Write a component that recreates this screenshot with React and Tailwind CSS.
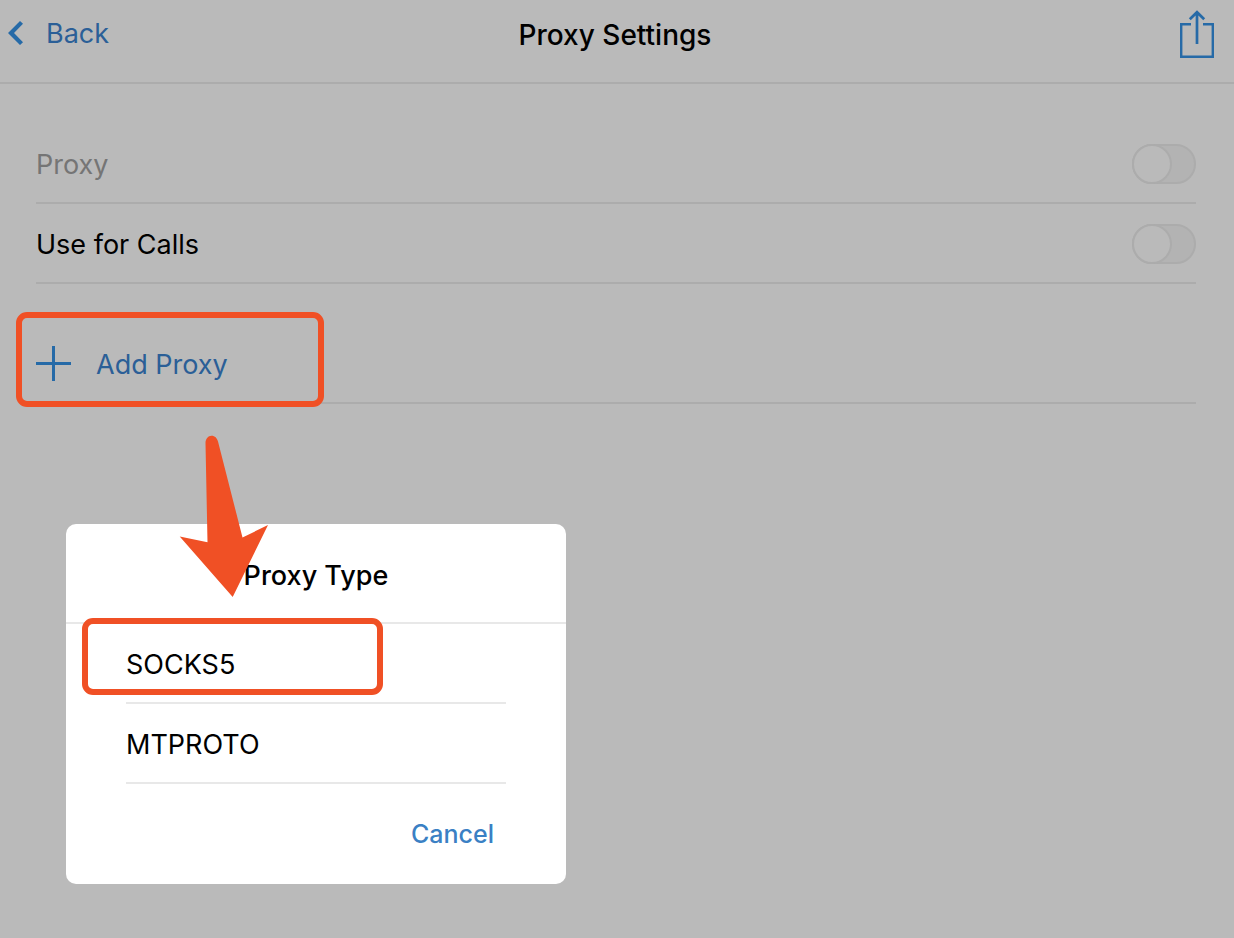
const proxyTypes = ["SOCKS5", "MTPROTO"];

function Highlight({ className }) {
  return (
    <span
      aria-hidden="true"
      className={`pointer-events-none absolute rounded-[11px] border-6 border-[#f05025] ${className}`}
    />
  );
}

function ToggleRow({ id, label, disabled }) {
  return (
    <div className="flex h-20 items-center justify-between border-b-2 border-[#acacac] pt-0.5">
      <label htmlFor={id} className={disabled ? "pt-0.5 text-[#757575]" : "pt-0.5 text-black"}>
        {label}
      </label>
      <input
        id={id}
        type="checkbox"
        role="switch"
        disabled={disabled}
        className="relative h-10 w-16 appearance-none rounded-full border-2 border-[#acacac] bg-[#b3b3b3] before:absolute before:-top-0.5 before:-left-0.5 before:size-10 before:rounded-full before:border-2 before:border-[#acacac] before:bg-[#bababa]"
      />
    </div>
  );
}

function Header() {
  return (
    <header className="grid h-[84px] grid-cols-[1fr_auto_1fr] items-center border-b-2 border-[#acacac] pr-3 pb-3.5 pl-2">
      <button type="button" className="flex items-center gap-6 justify-self-start text-[#2b5f97]">
        <svg width="14" height="26" viewBox="0 0 14 26" className="overflow-visible" aria-hidden="true">
          <path d="M0 12 12 0l3 2.700L6 12l9 9.300-3 2.700Z" fill="#266aa7" />
        </svg>
        Back
      </button>
      <h1 className="pt-0.5 text-[28px] font-medium text-black">Proxy Settings</h1>
      <button type="button" aria-label="Share" className="mr-2 justify-self-end">
        <svg width="34" height="48" viewBox="0 0 34 48" fill="none" stroke="#266aa7" aria-hidden="true" className="overflow-visible">
          <path d="M11 14.300H1.200v32.500h31.600V14.300H23" strokeWidth="2.400" />
          <path d="M17 34V2.500M9.800 9.200 17 2.200l7.200 7" strokeWidth="2.700" />
        </svg>
      </button>
    </header>
  );
}

function ProxyTypeDialog() {
  return (
    <section
      role="dialog"
      aria-labelledby="proxy-type-title"
      className="absolute top-[524px] left-[66px] w-[500px] rounded-[10px] bg-white text-black"
    >
      <h2
        id="proxy-type-title"
        className="flex h-[100px] items-center justify-center border-b-2 border-[#e8e8e8] pt-1.5 font-medium"
      >
        Proxy Type
      </h2>
      <ul className="relative px-[60px]">
        {proxyTypes.map((type) => (
          <li key={type} className="h-20 border-b-2 border-[#e8e8e8]">
            <button type="button" className="flex size-full items-center pt-1 text-left">
              {type}
            </button>
          </li>
        ))}
        <Highlight className="-top-1.5 left-4 h-[77px] w-[301px]" />
      </ul>
      <div className="flex h-[100px] items-center justify-end px-[60px]">
        <button type="button" className="px-3 text-[25px] font-medium text-[#3a80c4]">
          Cancel
        </button>
      </div>
    </section>
  );
}

export default function App() {
  return (
    <div className="relative min-h-screen bg-[#bababa] font-['Inter',sans-serif] text-[27px] leading-9">
      <Header />
      <main className="pt-10 pr-[38px] pl-9">
        <ToggleRow id="proxy" label="Proxy" disabled />
        <ToggleRow id="calls" label="Use for Calls" />
        <div className="relative mt-10 h-20 border-b-2 border-[#acacac]">
          <button type="button" className="flex size-full items-center gap-6 pt-0.5 text-[#2b5f97]">
            <svg width="36" height="36" viewBox="0 0 36 36" stroke="#266aa7" strokeWidth="3" aria-hidden="true">
              <path d="M0 17.500h35M17.500 0v35" />
            </svg>
            <span className="pt-0.5">Add Proxy</span>
          </button>
          <Highlight className="-top-3 -left-5 h-[95px] w-[308px]" />
        </div>
      </main>
      <ProxyTypeDialog />
      <svg
        width="90"
        height="164"
        viewBox="0 0 90 164"
        aria-hidden="true"
        className="pointer-events-none absolute top-[435px] left-[179px]"
      >
        <path
          d="M26.500 8C26.500 4 29 .7 32.500.7S38 3 39 6.500L63.500 102.500 89 90 53.700 162 .7 101.500 28.500 107.300Z"
          fill="#f05025"
        />
      </svg>
    </div>
  );
}
